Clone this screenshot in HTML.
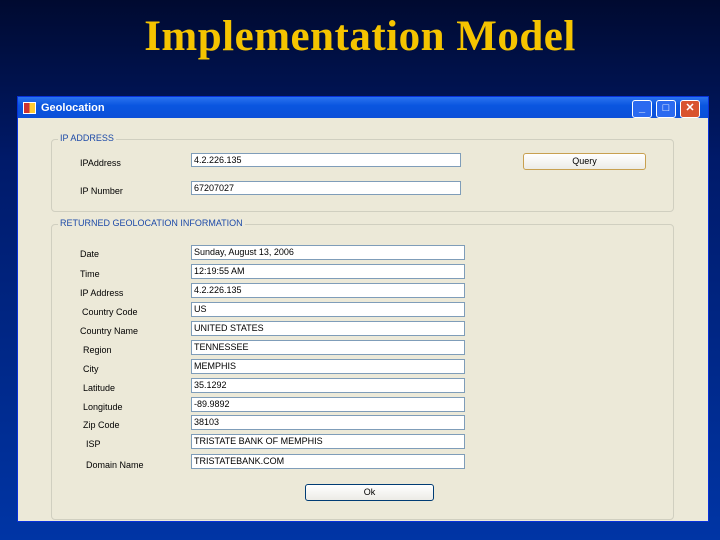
<!DOCTYPE html>
<html><head><style>
body{margin:0;width:720px;height:540px;overflow:hidden;background:linear-gradient(#000a30 0%,#001a6a 30%,#0035a5 100%);font-family:"Liberation Sans",sans-serif;position:relative}
h1{position:absolute;top:12px;left:0;width:720px;text-align:center;margin:0;font:bold 43px "Liberation Serif",serif;color:#f5c400;letter-spacing:0.5px}
.win{position:absolute;left:17px;top:96px;width:690px;height:424px;background:#ece9d8;border:1px solid #0831d9}
.tb{position:absolute;left:0;top:0;right:0;height:21px;background:linear-gradient(#2b73ef,#0a56e0 40%,#0b4fd8);color:#fff;font:bold 11px "Liberation Sans",sans-serif}
.tb span{position:absolute;left:23px;top:5px}
.ico{position:absolute;left:5px;top:5px;width:11px;height:10px;background:linear-gradient(90deg,#c33 50%,#fc3 50%);border:1px solid #fff}
.b{position:absolute;top:3px;width:18px;height:16px;border:1px solid #fff;border-radius:3px;background:#2b6af0;color:#fff;font:bold 11px "Liberation Sans",sans-serif;text-align:center;line-height:15px}
.g{position:absolute;border:1px solid #d0cfc0;border-radius:4px}
.gl{position:absolute;top:-7px;left:6px;background:#ece9d8;padding:0 2px;font-size:9px;color:#1d4aa8}
.l{position:absolute;font-size:9px;color:#000}
.f{position:absolute;background:#fff;border:1px solid #7f9db9;font-size:9px;padding-left:2px;box-sizing:border-box;line-height:12px;color:#000}
.btn{position:absolute;border:1px solid #003c74;border-radius:3px;background:linear-gradient(#fff,#ecebe6);font-size:9px;text-align:center;line-height:15px;box-sizing:border-box}
</style></head><body>
<h1>Implementation Model</h1>
<div class="win">
<div class="tb"><div class="ico"></div><span>Geolocation</span>
<div class="b" style="left:614px">_</div><div class="b" style="left:638px">□</div><div class="b" style="left:662px;background:#d9532e">✕</div></div>
<div class="g" style="left:33px;top:42px;width:621px;height:71px"><div class="gl">IP ADDRESS</div></div>
<div class="g" style="left:33px;top:127px;width:621px;height:294px"><div class="gl">RETURNED GEOLOCATION INFORMATION</div></div>
<div class="l" style="left:62px;top:61px">IPAddress</div>
<div class="l" style="left:62px;top:89px">IP Number</div>
<div class="f" style="left:173px;top:56px;width:270px;height:14px">4.2.226.135</div>
<div class="f" style="left:173px;top:84px;width:270px;height:14px">67207027</div>
<div class="btn" style="left:505px;top:56px;width:123px;height:17px;border-color:#c8a050">Query</div>
<div class="l" style="left:62px;top:152px">Date</div>
<div class="l" style="left:62px;top:172px">Time</div>
<div class="l" style="left:62px;top:191px">IP Address</div>
<div class="l" style="left:64px;top:210px">Country Code</div>
<div class="l" style="left:62px;top:229px">Country Name</div>
<div class="l" style="left:65px;top:248px">Region</div>
<div class="l" style="left:65px;top:267px">City</div>
<div class="l" style="left:65px;top:286px">Latitude</div>
<div class="l" style="left:65px;top:305px">Longitude</div>
<div class="l" style="left:65px;top:323px">Zip Code</div>
<div class="l" style="left:68px;top:342px">ISP</div>
<div class="l" style="left:68px;top:363px">Domain Name</div>
<div class="f" style="left:173px;top:148px;width:274px;height:15px">Sunday, August 13, 2006</div>
<div class="f" style="left:173px;top:167px;width:274px;height:15px">12:19:55 AM</div>
<div class="f" style="left:173px;top:186px;width:274px;height:15px">4.2.226.135</div>
<div class="f" style="left:173px;top:205px;width:274px;height:15px">US</div>
<div class="f" style="left:173px;top:224px;width:274px;height:15px">UNITED STATES</div>
<div class="f" style="left:173px;top:243px;width:274px;height:15px">TENNESSEE</div>
<div class="f" style="left:173px;top:262px;width:274px;height:15px">MEMPHIS</div>
<div class="f" style="left:173px;top:281px;width:274px;height:15px">35.1292</div>
<div class="f" style="left:173px;top:300px;width:274px;height:15px">-89.9892</div>
<div class="f" style="left:173px;top:318px;width:274px;height:15px">38103</div>
<div class="f" style="left:173px;top:337px;width:274px;height:15px">TRISTATE BANK OF MEMPHIS</div>
<div class="f" style="left:173px;top:357px;width:274px;height:15px">TRISTATEBANK.COM</div>
<div class="btn" style="left:287px;top:387px;width:129px;height:17px">Ok</div>
</div>
</body></html>
